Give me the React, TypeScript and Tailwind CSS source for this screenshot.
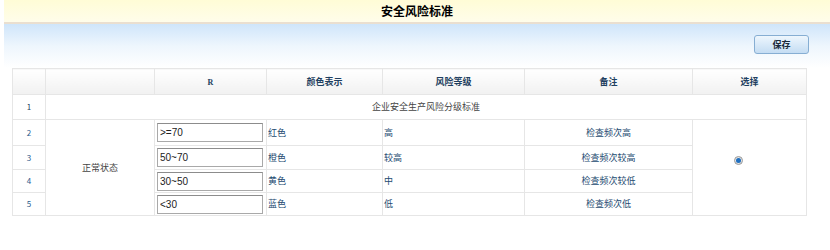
import { useState } from 'react';

const rows = [
  { no: 2, range: '>=70', color: '红色', level: '高', note: '检查频次高', h: 'h-[26px]' },
  { no: 3, range: '50~70', color: '橙色', level: '较高', note: '检查频次较高', h: 'h-[24px]' },
  { no: 4, range: '30~50', color: '黄色', level: '中', note: '检查频次较低', h: 'h-[23px]' },
  { no: 5, range: '<30', color: '蓝色', level: '低', note: '检查频次低', h: 'h-[23px]' },
];

const cell = 'border border-[#e6e6e6] p-0';
const head =
  'border border-[#e6e6e6] p-0 font-bold text-[9px] text-[#1e3f60] bg-gradient-to-b from-white to-[#f1f1f1] text-center';

export default function App() {
  const [values, setValues] = useState(rows.map((r) => r.range));
  const [checked, setChecked] = useState(true);

  return (
    <div className="w-[830px] h-[250px] bg-white font-['Noto_Sans_CJK_SC','Noto_Sans',sans-serif] text-[9px]">
      <div className="ml-[4px]">
        <div className="h-[22px] bg-gradient-to-b from-[#fffcd6] to-[#fffdea] flex items-center justify-center">
          <span className="font-bold text-[12px] text-black leading-none">安全风险标准</span>
        </div>
        <div className="h-[2px] bg-[#eadfd0]" />
        <div className="h-[44px] bg-gradient-to-b from-[#cfe5fa] via-[#eef6fd] via-50% to-white flex items-start justify-end pr-[21px] pt-[11px]">
          <button className="w-[55px] h-[19px] rounded-[3px] border border-[#86aed3] bg-gradient-to-b from-[#eef6fd] to-[#c4ddf3] text-[9px] font-bold text-[#1a2a3a] leading-none">
            保存
          </button>
        </div>
      </div>

      <table className="ml-[12px] border-collapse table-fixed w-[794px] text-[#234a70]">
        <colgroup>
          <col className="w-[33px]" />
          <col className="w-[109px]" />
          <col className="w-[112px]" />
          <col className="w-[116px]" />
          <col className="w-[142px]" />
          <col className="w-[168px]" />
          <col className="w-[114px]" />
        </colgroup>
        <thead>
          <tr className="h-[26px]">
            <th className={head} />
            <th className={head} />
            <th className={head}>
              <span className="font-['Liberation_Serif',serif] text-[8px]">R</span>
            </th>
            <th className={head}>颜色表示</th>
            <th className={head}>风险等级</th>
            <th className={head}>备注</th>
            <th className={head}>选择</th>
          </tr>
        </thead>
        <tbody>
          <tr className="h-[25px]">
            <td className={`${cell} text-center text-[8px] text-[#1e3f60]`}>1</td>
            <td className={`${cell} text-center text-[#444]`} colSpan={6}>
              企业安全生产风险分级标准
            </td>
          </tr>
          {rows.map((r, i) => (
            <tr key={r.no} className={r.h}>
              <td className={`${cell} text-center text-[8px] text-[#2b5b8c]`}>{r.no}</td>
              {i === 0 && (
                <td className={`${cell} text-center text-[#444]`} rowSpan={4}>
                  正常状态
                </td>
              )}
              <td className={`${cell} pl-[2px]`}>
                <input
                  value={values[i]}
                  onChange={(e) =>
                    setValues((v) => v.map((x, j) => (j === i ? e.target.value : x)))
                  }
                  className="block w-[106px] h-[19px] border border-[#a9a9a9] border-t-[#8c8c8c] px-[2px] text-[10px] text-[#222] font-['Liberation_Sans',sans-serif] outline-none"
                />
              </td>
              <td className={`${cell} pl-[1px]`}>{r.color}</td>
              <td className={`${cell} pl-[1px]`}>{r.level}</td>
              <td className={`${cell} text-center`}>{r.note}</td>
              {i === 0 && (
                <td className={`${cell} pl-[41px]`} rowSpan={4}>
                  <button
                    onClick={() => setChecked(!checked)}
                    className="flex w-[9px] h-[9px] rounded-full border border-[#9a9a9a] bg-[#e4e4e4] items-center justify-center mb-[14px]"
                  >
                    {checked && <span className="w-[5px] h-[5px] rounded-full bg-[#1f6fc0]" />}
                  </button>
                </td>
              )}
            </tr>
          ))}
        </tbody>
      </table>
    </div>
  );
}
